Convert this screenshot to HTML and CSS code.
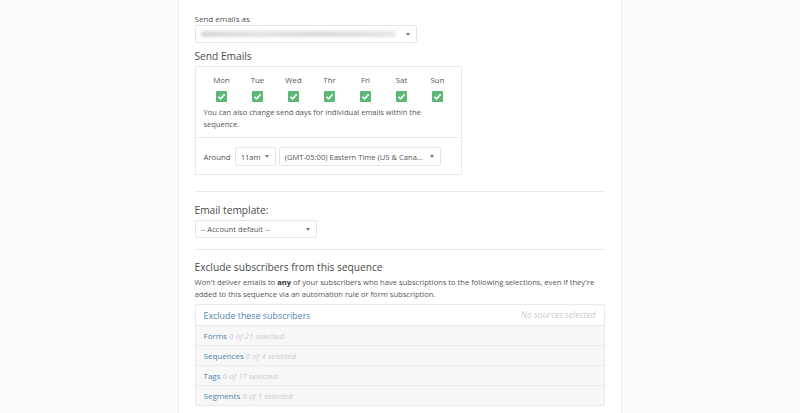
FILE: index.html
```html
<!DOCTYPE html>
<html>
<head>
<meta charset="utf-8">
<link rel="stylesheet" href="styles.css">
</head>
<body>
<div class="page">
  <div class="panel">
    <div class="field">
      <label class="small-label">Send emails as</label>
      <div class="select select-sender"><span class="blur"></span><span class="caret"></span></div>
    </div>
    <h3 class="heading first">Send Emails</h3>
    <div class="days-box">
      <div class="days-top">
        <div class="days">
          <div class="day"><span>Mon</span><span class="check"><svg viewBox="0 0 10 10"><path d="M2.2 5.2 L4.2 7.1 L7.9 2.9" /></svg></span></div>
          <div class="day"><span>Tue</span><span class="check"><svg viewBox="0 0 10 10"><path d="M2.2 5.2 L4.2 7.1 L7.9 2.9" /></svg></span></div>
          <div class="day"><span>Wed</span><span class="check"><svg viewBox="0 0 10 10"><path d="M2.2 5.2 L4.2 7.1 L7.9 2.9" /></svg></span></div>
          <div class="day"><span>Thr</span><span class="check"><svg viewBox="0 0 10 10"><path d="M2.2 5.2 L4.2 7.1 L7.9 2.9" /></svg></span></div>
          <div class="day"><span>Fri</span><span class="check"><svg viewBox="0 0 10 10"><path d="M2.2 5.2 L4.2 7.1 L7.9 2.9" /></svg></span></div>
          <div class="day"><span>Sat</span><span class="check"><svg viewBox="0 0 10 10"><path d="M2.2 5.2 L4.2 7.1 L7.9 2.9" /></svg></span></div>
          <div class="day"><span>Sun</span><span class="check"><svg viewBox="0 0 10 10"><path d="M2.2 5.2 L4.2 7.1 L7.9 2.9" /></svg></span></div>
        </div>
        <p class="note">You can also change send days for individual emails within the sequence.</p>
      </div>
      <div class="days-bottom">
        <span class="around">Around</span>
        <div class="select select-time"><span>11am</span><span class="caret"></span></div>
        <div class="select select-tz"><span>(GMT-05:00) Eastern Time (US &amp; Cana...</span><span class="caret"></span></div>
      </div>
    </div>
    <hr class="rule">
    <h3 class="heading">Email template:</h3>
    <div class="select select-template"><span>-- Account default --</span><span class="caret"></span></div>
    <hr class="rule rule2">
    <h3 class="heading">Exclude subscribers from this sequence</h3>
    <p class="desc">Won't deliver emails to <strong class="em">any</strong> of your subscribers who have subscriptions to the following selections, even if they're added to this sequence via an automation rule or form subscription.</p>
    <div class="exclude">
      <div class="ex-head"><span class="ex-title">Exclude these subscribers</span><span class="ex-none">No sources selected</span></div>
      <div class="ex-row"><span class="ex-name">Forms</span> <span class="ex-count">0 of 21 selected</span></div>
      <div class="ex-row"><span class="ex-name">Sequences</span> <span class="ex-count">0 of 4 selected</span></div>
      <div class="ex-row"><span class="ex-name">Tags</span> <span class="ex-count">0 of 17 selected</span></div>
      <div class="ex-row"><span class="ex-name">Segments</span> <span class="ex-count">0 of 1 selected</span></div>
    </div>
  </div>
</div>
</body>
</html>
```
FILE: styles.css
```css
html, body {
  margin: 0;
  padding: 0;
  background: #f9fafc;
  font-family: "Open Sans", "Liberation Sans", sans-serif;
  color: #555;
}
.page {
  display: flex;
  justify-content: center;
  height: 413px;
  overflow: hidden;
}
.panel {
  width: 410px;
  margin-left: -1px;
  background: #fff;
  border-left: 1px solid #eceef1;
  border-right: 1px solid #eceef1;
  padding: 13px 16px 0 16px;
  box-sizing: content-box;
}
.small-label {
  display: block;
  font-size: 8px;
  color: #555;
  line-height: 11px;
  margin-bottom: 1px;
}
.select {
  display: flex;
  align-items: center;
  justify-content: space-between;
  border: 1px solid #e3e5e8;
  border-radius: 2px;
  background: #fff;
  font-size: 7.6px;
  color: #555;
  box-sizing: border-box;
  padding: 0 6px 0 5px;
  white-space: nowrap;
}
.caret {
  width: 0;
  height: 0;
  border-left: 2px solid transparent;
  border-right: 2px solid transparent;
  border-top: 3px solid #777;
  flex: none;
}
.select-sender {
  width: 222px;
  height: 18px;
}
.blur {
  display: block;
  width: 195px;
  height: 6px;
  border-radius: 3px;
  background: linear-gradient(90deg, #d5d7da, #e3e4e6 30%, #d9dadc 60%, #e6e7e8);
  filter: blur(1.5px);
}
.heading {
  margin: 0;
  font-weight: 400;
  font-size: 10.2px;
  color: #4a4a4a;
  line-height: 16px;
}
.heading.first {
  margin-top: 5px;
  margin-bottom: 2px;
}
.days-box {
  width: 267px;
  border: 1px solid #e8e9eb;
  box-sizing: border-box;
}
.days-top {
  padding: 8px 8px 0 8px;
  border-bottom: 1px solid #e8e9eb;
}
.days {
  display: grid;
  grid-template-columns: repeat(7, 36px);
}
.day {
  display: flex;
  flex-direction: column;
  align-items: center;
  font-size: 7.8px;
  color: #555;
  line-height: 11px;
  gap: 5px;
}
.check {
  width: 11px;
  height: 11px;
  background: #5cb878;
  border-radius: 1px;
  display: block;
}
.check svg {
  display: block;
  width: 11px;
  height: 11px;
  fill: none;
  stroke: #fff;
  stroke-width: 1.4;
}
.note {
  margin: 4px 0 0 0;
  font-size: 7.5px;
  line-height: 12px;
  color: #555;
  padding-bottom: 7px;
}
.days-bottom {
  display: flex;
  align-items: center;
  gap: 3px;
  padding: 9px 8px 8px 8px;
}
.around {
  font-size: 7.8px;
  color: #555;
  margin-right: 1px;
}
.select-time {
  width: 41px;
  height: 19px;
}
.select-tz {
  width: 162px;
  height: 19px;
}
.rule {
  border: 0;
  border-top: 1px solid #e6e7e9;
  margin: 16px 0 10px 0;
}
.rule2 {
  margin: 11px 0 9px 0;
}
.select-template {
  width: 122px;
  height: 18px;
  margin-top: 2px;
}
.desc {
  margin: 1px 0 4px 0;
  font-size: 7.6px;
  line-height: 12px;
  color: #555;
}
.desc .em {
  color: #333;
  font-weight: 700;
}
.exclude {
  border: 1px solid #e8e9eb;
  border-radius: 2px;
}
.ex-head {
  display: flex;
  justify-content: space-between;
  align-items: center;
  height: 20px;
  padding: 0 8px;
  background: #fff;
  border-bottom: 1px solid #e8e9eb;
}
.ex-title {
  font-size: 8.9px;
  color: #4f84ad;
}
.ex-none {
  font-size: 8.6px;
  font-style: italic;
  color: #c8cacd;
}
.ex-row {
  height: 19px;
  line-height: 19px;
  padding: 0 8px;
  background: #f7f7f8;
  border-bottom: 1px solid #eaebed;
  font-size: 8px;
}
.ex-row:last-child {
  border-bottom: 0;
}
.ex-name {
  color: #4f84ad;
}
.ex-count {
  color: #c8cacd;
  font-style: italic;
}
```
